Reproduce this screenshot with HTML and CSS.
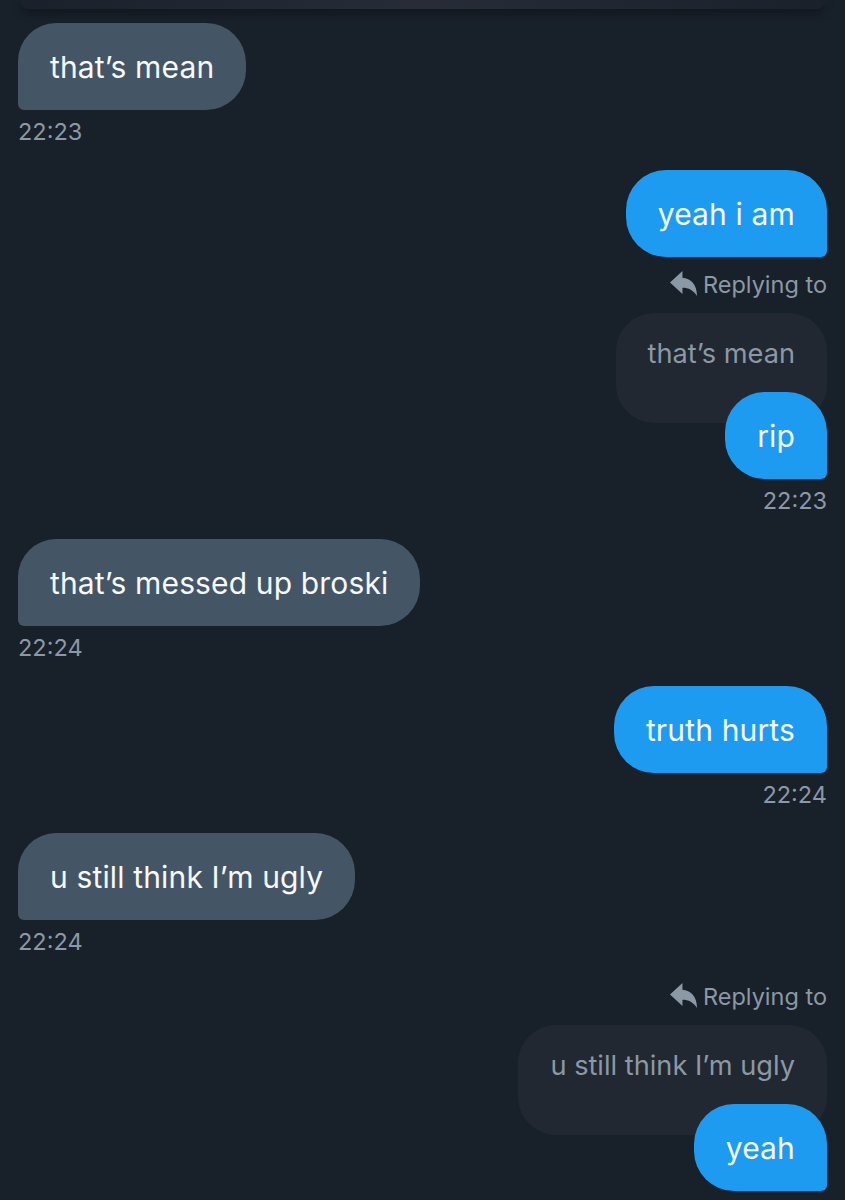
FILE: index.html
```html
<!DOCTYPE html>
<html>
<head>
<meta charset="utf-8">
<link rel="stylesheet" href="styles.css">
</head>
<body>
<div class="topbar"></div>
<div class="thread">
  <div class="group received first">
    <div class="bubble in">that’s mean</div>
    <div class="time">22:23</div>
  </div>
  <div class="group sent">
    <div class="bubble out">yeah i am</div>
  </div>
  <div class="group sent reply-after-bubble">
    <div class="replying">
      <svg class="reply-icon" viewBox="0 0 26 24" width="27" height="25"><path d="M0 11 L12 0 V6.5 C20 7 26 13 26 24 C22.5 18.5 18 16 12 16 V22 Z" fill="#8b98a5"/></svg>
      <span>Replying to</span>
    </div>
    <div class="quote">that’s mean</div>
    <div class="bubble out overlap">rip</div>
    <div class="time">22:23</div>
  </div>
  <div class="group received">
    <div class="bubble in">that’s messed up broski</div>
    <div class="time">22:24</div>
  </div>
  <div class="group sent">
    <div class="bubble out">truth hurts</div>
    <div class="time">22:24</div>
  </div>
  <div class="group received">
    <div class="bubble in">u still think I’m ugly</div>
    <div class="time">22:24</div>
  </div>
  <div class="group sent reply-after-time">
    <div class="replying">
      <svg class="reply-icon" viewBox="0 0 26 24" width="27" height="25"><path d="M0 11 L12 0 V6.5 C20 7 26 13 26 24 C22.5 18.5 18 16 12 16 V22 Z" fill="#8b98a5"/></svg>
      <span>Replying to</span>
    </div>
    <div class="quote">u still think I’m ugly</div>
    <div class="bubble out overlap">yeah</div>
  </div>
</div>
</body>
</html>
```

FILE: styles.css
```css
html, body {
  margin: 0;
  padding: 0;
  background: #18202a;
}
body {
  font-family: Inter, "Noto Sans", "Liberation Sans", sans-serif;
  width: 845px;
  height: 1200px;
  overflow: hidden;
}
.topbar {
  height: 9px;
  margin: 0 20px;
  border-radius: 0 0 22px 22px;
  background: linear-gradient(90deg, #1a212b 0%, #232934 35%, #272c37 50%, #232934 65%, #1a212b 100%);
  box-shadow: 0 4px 10px rgba(0, 0, 0, 0.35);
}
.thread {
  padding: 0 18px;
  display: flex;
  flex-direction: column;
}
.group {
  display: flex;
  flex-direction: column;
  margin-top: 24px;
}
.group.first { margin-top: 14px; }
.group.reply-after-bubble { margin-top: 13px; }
.group.reply-after-time { margin-top: 26px; }
.received { align-items: flex-start; }
.sent { align-items: flex-end; }
.bubble {
  font-size: 30px;
  line-height: 35px;
  padding: 27px 32px 25px;
  color: #f7f9fa;
  letter-spacing: 0.15px;
  white-space: nowrap;
  position: relative;
}
.bubble.in {
  background: #445566;
  border-radius: 38px 40px 40px 6px;
}
.bubble.out {
  background: #1d9bf0;
  border-radius: 40px 40px 6px 40px;
}
.bubble.overlap {
  margin-top: -31px;
}
.time {
  margin-top: 8px;
  font-size: 23.5px;
  line-height: 28px;
  color: #8b98a5;
}
.replying {
  display: flex;
  align-items: center;
  gap: 6px;
  height: 28px;
  font-size: 23.5px;
  color: #8b98a5;
}
.reply-icon {
  display: block;
  margin-top: -2px;
}
.quote {
  margin-top: 15px;
  height: 110px;
  box-sizing: border-box;
  padding: 25px 32px 0;
  font-size: 27.2px;
  line-height: 32px;
  color: #8b98a5;
  background: #212832;
  border-radius: 38px;
  white-space: nowrap;
}
```
